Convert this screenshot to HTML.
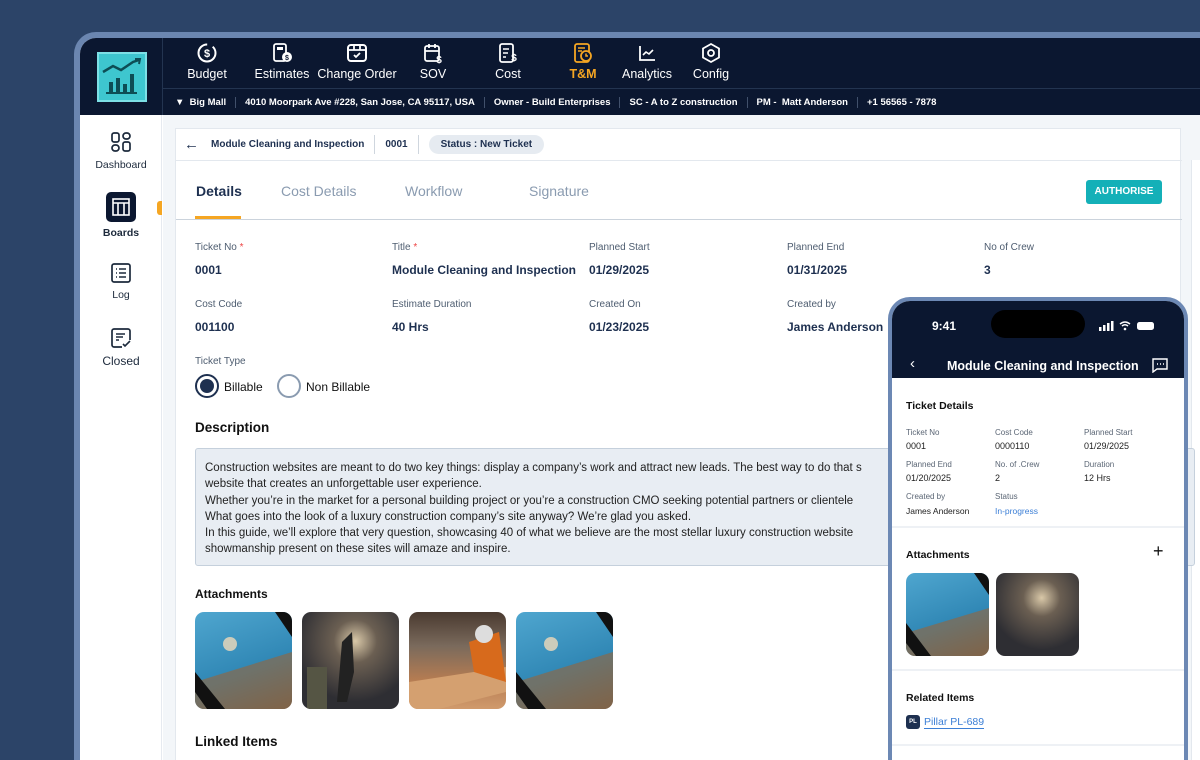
<!DOCTYPE html>
<html><head><meta charset="utf-8"><style>
*{margin:0;padding:0;box-sizing:border-box}
html,body{width:1200px;height:760px;overflow:hidden}
body{background:#2c4468;font-family:"Liberation Sans",sans-serif;position:relative}
.abs{position:absolute}
.frame{left:74px;top:32px;width:1126px;height:728px;border-radius:22px 0 0 0;background:#6b86b0}
.app{left:80px;top:38px;width:1120px;height:722px;background:#fff;border-radius:16px 0 0 0;overflow:hidden}
.top{left:0;top:0;width:1130px;height:77px;background:#0b1730}
.logo{left:17px;top:14px;width:50px;height:50px;background:#3ec6cf;border:2px solid #7de0e6}
.nav{top:4px;text-align:center;color:#fff;font-size:12.5px;width:80px}
.nav svg{display:block;margin:0 auto 3px}
.sub{left:83px;top:50px;height:27px;width:1050px;border-top:1px solid #233450;color:#fff;font-size:9.5px;font-weight:bold;display:flex;align-items:center;padding-left:12px}
.sub span{padding:0 9px;border-left:1px solid #41506b}
.sub span:first-child{border:none;padding-left:0}
.vsep{left:82px;top:0;width:1px;height:77px;background:#233450}
.side{left:0;top:77px;width:82px;height:650px;background:#fff;border-right:1px solid #e6eaf0}
.si{width:82px;text-align:center;font-size:10.5px;color:#1d2a3c}
.main{left:83px;top:77px;width:1050px;height:650px;background:#f3f6f9}
.card{left:12px;top:13px;width:1006px;height:650px;background:#fff;border:1px solid #e3e8ee}
.lbl{font-size:10px;color:#4e5d70}
.val{font-size:12px;font-weight:bold;color:#1e3050}
.h{font-size:13.5px;font-weight:bold;color:#111}
.img{border-radius:9px;overflow:hidden}
.phone{left:888px;top:297px;width:300px;height:463px;border-radius:22px 22px 0 0;background:#6c88b4;padding:4px 4px 0}
.pin{width:292px;height:459px;border-radius:18px 18px 0 0;background:#fff;overflow:hidden;position:relative}
.pl{font-size:8px;color:#5b6675}
.pv{font-size:9px;color:#222}
</style></head><body>
<div class="abs frame"></div>
<div class="abs app">
 <div class="abs top">
  <div class="abs logo"><svg width="46" height="46" viewBox="0 0 46 46"><path d="M4 18 L14 12 L22 16 L34 8 L40 6" stroke="#0d4d55" stroke-width="2.5" fill="none"/><path d="M36 5 L41 5 L40 10" stroke="#0d4d55" stroke-width="2" fill="none"/><rect x="10" y="28" width="4" height="10" fill="#0d4d55"/><rect x="17" y="24" width="4" height="14" fill="#0d4d55"/><rect x="24" y="30" width="4" height="8" fill="#0d4d55"/><rect x="31" y="20" width="4" height="18" fill="#0d4d55"/><rect x="7" y="38" width="31" height="2" fill="#0d4d55"/></svg></div>
  <div class="abs vsep"></div>
  <div class="abs nav" style="left:87px"><svg width="22" height="22" viewBox="0 0 22 22"><circle cx="11" cy="11" r="8.5" stroke="#fff" stroke-width="2" fill="none" stroke-dasharray="40 6"/><text x="11" y="15" fill="#fff" font-size="11" font-weight="bold" text-anchor="middle" font-family="Liberation Sans">$</text></svg>Budget</div>
  <div class="abs nav" style="left:162px"><svg width="22" height="22" viewBox="0 0 22 22"><rect x="3" y="2" width="12" height="17" rx="2" stroke="#fff" stroke-width="1.8" fill="none"/><rect x="6" y="5" width="6" height="3" fill="#fff"/><circle cx="16" cy="15" r="5" fill="#fff"/><text x="16" y="18" font-size="7" text-anchor="middle" fill="#0b1730" font-weight="bold">$</text></svg>Estimates</div>
  <div class="abs nav" style="left:237px;width:80px"><svg width="22" height="22" viewBox="0 0 22 22"><rect x="2" y="3" width="18" height="16" rx="3" stroke="#fff" stroke-width="2" fill="none"/><path d="M2 8H20M8 3V8M14 3V8M8 13L10 15L14 11" stroke="#fff" stroke-width="1.8" fill="none"/></svg>Change Order</div>
  <div class="abs nav" style="left:313px"><svg width="22" height="22" viewBox="0 0 22 22"><rect x="3" y="4" width="14" height="15" rx="2" stroke="#fff" stroke-width="1.8" fill="none"/><path d="M3 9H17M7 2V6M13 2V6" stroke="#fff" stroke-width="1.8"/><text x="17" y="21" font-size="10" fill="#fff" font-weight="bold" text-anchor="middle">$</text></svg>SOV</div>
  <div class="abs nav" style="left:388px"><svg width="22" height="22" viewBox="0 0 22 22"><rect x="3" y="2" width="13" height="18" rx="2" stroke="#fff" stroke-width="1.8" fill="none"/><path d="M6 7H12M6 11H11M6 15H9" stroke="#fff" stroke-width="1.6"/><text x="17" y="19" font-size="10" fill="#fff" font-weight="bold" text-anchor="middle">$</text></svg>Cost</div>
  <div class="abs nav" style="left:463px;color:#f5a623;font-weight:bold"><svg width="22" height="22" viewBox="0 0 22 22"><rect x="3" y="2" width="14" height="18" rx="2" stroke="#f5a623" stroke-width="1.8" fill="none"/><path d="M6 6H13M6 9H10" stroke="#f5a623" stroke-width="1.6"/><circle cx="14" cy="14" r="5" stroke="#f5a623" stroke-width="1.8" fill="#0b1730"/><path d="M14 11.5V14H16" stroke="#f5a623" stroke-width="1.5" fill="none"/></svg>T&amp;M</div>
  <div class="abs nav" style="left:527px"><svg width="22" height="22" viewBox="0 0 22 22"><path d="M4 4V18H19" stroke="#fff" stroke-width="1.8" fill="none"/><path d="M7 13L10 10L13 12L17 8" stroke="#fff" stroke-width="1.6" fill="none"/></svg>Analytics</div>
  <div class="abs nav" style="left:591px"><svg width="22" height="22" viewBox="0 0 22 22"><path d="M11 2L19 6.5V15.5L11 20L3 15.5V6.5Z" stroke="#fff" stroke-width="1.8" fill="none"/><circle cx="11" cy="11" r="3" stroke="#fff" stroke-width="1.8" fill="none"/></svg>Config</div>
  <div class="abs sub"><span>▼&nbsp; Big Mall</span><span>4010 Moorpark Ave #228, San Jose, CA 95117, USA</span><span>Owner - Build Enterprises</span><span>SC - A to Z construction</span><span>PM -&nbsp; Matt Anderson</span><span>+1 56565 - 7878</span></div>
 </div>
 <div class="abs side">
  <div class="abs si" style="top:16px"><svg width="22" height="22" viewBox="0 0 22 22" style="display:block;margin:0 auto 6px"><rect x="2" y="2" width="7" height="9" rx="2" stroke="#1d2a3c" stroke-width="1.7" fill="none"/><rect x="13" y="2" width="7" height="6" rx="3" stroke="#1d2a3c" stroke-width="1.7" fill="none"/><rect x="2" y="14" width="7" height="6" rx="3" stroke="#1d2a3c" stroke-width="1.7" fill="none"/><rect x="13" y="11" width="7" height="9" rx="2" stroke="#1d2a3c" stroke-width="1.7" fill="none"/></svg>Dashboard</div>
  <div class="abs si" style="top:77px;font-weight:bold"><div style="width:30px;height:30px;background:#0b1730;border-radius:5px;margin:0 auto 5px;padding:6px"><svg width="18" height="18" viewBox="0 0 18 18"><rect x="1" y="1" width="16" height="16" stroke="#fff" stroke-width="1.6" fill="none"/><path d="M1 5H17M6 5V17M12 5V17" stroke="#fff" stroke-width="1.6"/></svg></div>Boards</div>
  <div class="abs" style="left:77px;top:86px;width:5px;height:14px;background:#f5a623;border-radius:3px 0 0 3px"></div>
  <div class="abs si" style="top:147px"><svg width="22" height="22" viewBox="0 0 22 22" style="display:block;margin:0 auto 5px"><rect x="2" y="2" width="18" height="18" rx="2" stroke="#1d2a3c" stroke-width="1.7" fill="none"/><path d="M6 7H7M6 11H7M6 15H7M9 7H16M9 11H16M9 15H16" stroke="#1d2a3c" stroke-width="1.6"/></svg>Log</div>
  <div class="abs si" style="top:212px;font-size:12px"><svg width="22" height="22" viewBox="0 0 22 22" style="display:block;margin:0 auto 5px"><path d="M12 20H4a2 2 0 0 1-2-2V4a2 2 0 0 1 2-2h14a2 2 0 0 1 2 2v9" stroke="#1d2a3c" stroke-width="1.7" fill="none"/><path d="M6 7H15M6 10H13M6 13H9M13 17L15 19L20 14" stroke="#1d2a3c" stroke-width="1.6" fill="none"/></svg>Closed</div>
 </div>
 <div class="abs main">
  <div class="abs" style="left:1028px;top:45px;width:22px;height:630px;background:#fff;border-left:1px solid #e3e8ee"></div>
  <div class="abs card">
   <div class="abs" style="left:0;top:0;width:1006px;height:32px;border-bottom:1px solid #e3e8ee;display:flex;align-items:center;font-size:10px;color:#1e3050;font-weight:bold">
    <span style="font-size:15px;margin:0 12px 0 8px;font-weight:normal">←</span><span>Module Cleaning and Inspection</span><span style="border-left:1px solid #cfd6de;border-right:1px solid #cfd6de;padding:4px 10px;margin:0 10px">0001</span><span style="background:#e6ebf1;border-radius:10px;padding:4px 12px">Status : New Ticket</span>
   </div>
   <div class="abs" style="left:0;top:33px;width:1006px;height:58px;border-bottom:1px solid #cbd3dc"></div>
   <div class="abs" style="left:20px;top:54px;font-size:14px;font-weight:bold;color:#1e3050">Details</div>
   <div class="abs" style="left:19px;top:87px;width:46px;height:3px;background:#f5a623"></div>
   <div class="abs" style="left:105px;top:54px;font-size:14px;color:#8a9bb0">Cost Details</div>
   <div class="abs" style="left:229px;top:54px;font-size:14px;color:#8a9bb0">Workflow</div>
   <div class="abs" style="left:353px;top:54px;font-size:14px;color:#8a9bb0">Signature</div>
   <div class="abs" style="left:910px;top:51px;width:76px;height:24px;background:#14b0b8;border-radius:3px;color:#fff;font-size:10px;font-weight:bold;text-align:center;line-height:24px">AUTHORISE</div>

   <div class="abs lbl" style="left:19px;top:113px">Ticket No <span style="color:#e44">*</span></div><div class="abs val" style="left:19px;top:134px">0001</div>
   <div class="abs lbl" style="left:216px;top:113px">Title <span style="color:#e44">*</span></div><div class="abs val" style="left:216px;top:134px">Module Cleaning and Inspection</div>
   <div class="abs lbl" style="left:413px;top:113px">Planned Start</div><div class="abs val" style="left:413px;top:134px">01/29/2025</div>
   <div class="abs lbl" style="left:611px;top:113px">Planned End</div><div class="abs val" style="left:611px;top:134px">01/31/2025</div>
   <div class="abs lbl" style="left:808px;top:113px">No of Crew</div><div class="abs val" style="left:808px;top:134px">3</div>
   <div class="abs lbl" style="left:19px;top:170px">Cost Code</div><div class="abs val" style="left:19px;top:191px">001100</div>
   <div class="abs lbl" style="left:216px;top:170px">Estimate Duration</div><div class="abs val" style="left:216px;top:191px">40 Hrs</div>
   <div class="abs lbl" style="left:413px;top:170px">Created On</div><div class="abs val" style="left:413px;top:191px">01/23/2025</div>
   <div class="abs lbl" style="left:611px;top:170px">Created by</div><div class="abs val" style="left:611px;top:191px">James Anderson</div>
   <div class="abs lbl" style="left:19px;top:227px">Ticket Type</div>
   <div class="abs" style="left:19px;top:245px;width:24px;height:24px;border-radius:50%;border:2px solid #1e3050;padding:3px"><div style="width:14px;height:14px;border-radius:50%;background:#1e3050"></div></div>
   <div class="abs" style="left:48px;top:251px;font-size:12px;color:#111">Billable</div>
   <div class="abs" style="left:101px;top:245px;width:24px;height:24px;border-radius:50%;border:2px solid #8a9bb0"></div>
   <div class="abs" style="left:130px;top:251px;font-size:12px;color:#111">Non Billable</div>
   <div class="abs h" style="left:19px;top:291px">Description</div>
   <div class="abs" style="left:19px;top:319px;width:1000px;height:118px;background:#e8edf3;border:1px solid #c5d0dc;border-radius:3px;padding:11px 9px;font-size:11.5px;line-height:16.3px;color:#222;white-space:nowrap">Construction websites are meant to do two key things: display a company’s work and attract new leads. The best way to do that s<br>website that creates an unforgettable user experience.<br>Whether you’re in the market for a personal building project or you’re a construction CMO seeking potential partners or clientele<br>What goes into the look of a luxury construction company’s site anyway? We’re glad you asked.<br>In this guide, we’ll explore that very question, showcasing 40 of what we believe are the most stellar luxury construction website<br>showmanship present on these sites will amaze and inspire.</div>
   <div class="abs" style="left:19px;top:458px;font-size:12px;font-weight:bold;color:#111">Attachments</div>
   <div class="abs img" style="left:19px;top:483px;width:97px;height:97px;background:linear-gradient(160deg,#4fa6cf,#2f86b4 60%,#6a5440)"><svg width="97" height="97"><path d="M0 70L97 40V97H0Z" fill="#8a6a4a" opacity=".7"/><path d="M0 60L30 97H12L0 80Z" fill="#111"/><path d="M80 0H97V25Z" fill="#111"/><circle cx="35" cy="32" r="7" fill="#ccb"/></svg></div>
   <div class="abs img" style="left:126px;top:483px;width:97px;height:97px;background:radial-gradient(circle at 55% 30%,#d9c8a8 0,#6b5f52 25%,#2e2e33 70%)"><svg width="97" height="97"><path d="M40 30L50 20L52 60L45 90H35Z" fill="#222"/><path d="M5 55H25V97H5Z" fill="#554"/></svg></div>
   <div class="abs img" style="left:233px;top:483px;width:97px;height:97px;background:linear-gradient(180deg,#4a3a30,#7a6a5c 35%,#b57c52 70%,#d09a6c)"><svg width="97" height="97"><path d="M0 70L97 55V80L30 97H0Z" fill="#d4a070"/><path d="M60 30L90 20L97 70L65 60Z" fill="#d76a1c"/><circle cx="75" cy="22" r="9" fill="#ddd"/></svg></div>
   <div class="abs img" style="left:340px;top:483px;width:97px;height:97px;background:linear-gradient(160deg,#4fa6cf,#2f86b4 60%,#6a5440)"><svg width="97" height="97"><path d="M0 70L97 40V97H0Z" fill="#8a6a4a" opacity=".7"/><path d="M0 60L30 97H12L0 80Z" fill="#111"/><path d="M80 0H97V25Z" fill="#111"/><circle cx="35" cy="32" r="7" fill="#ccb"/></svg></div>
   <div class="abs h" style="left:19px;top:605px">Linked Items</div>
  </div>
 </div>
</div>
<div class="abs phone"><div class="pin">
 <div class="abs" style="left:0;top:0;width:292px;height:77px;background:#0b1730"></div>
 <div class="abs" style="left:40px;top:18px;color:#fff;font-size:12px;font-weight:bold">9:41</div>
 <div class="abs" style="left:99px;top:9px;width:94px;height:28px;border-radius:14px;background:#000"></div>
 <svg class="abs" style="left:207px;top:20px" width="70" height="10"><rect x="0" y="6" width="2.5" height="4" fill="#fff"/><rect x="4" y="4" width="2.5" height="6" fill="#fff"/><rect x="8" y="2" width="2.5" height="8" fill="#fff"/><rect x="12" y="0" width="2.5" height="10" fill="#fff"/><path d="M21 3Q26 -1 31 3M23 5Q26 2.5 29 5" stroke="#fff" stroke-width="1.5" fill="none"/><circle cx="26" cy="8" r="1.3" fill="#fff"/><rect x="38" y="1" width="17" height="8" rx="2.5" fill="#fff"/></svg>
 <div class="abs" style="left:18px;top:54px;color:#fff;font-size:15px">‹</div>
 <div class="abs" style="left:55px;top:58px;color:#fff;font-size:12.5px;font-weight:bold">Module Cleaning and Inspection</div>
 <svg class="abs" style="left:260px;top:57px" width="16" height="15"><path d="M1 1H15V11H5L1 14Z" stroke="#fff" stroke-width="1.4" fill="none"/><path d="M5 6H6M8 6H9M11 6H12" stroke="#fff" stroke-width="1.4"/></svg>
 <div class="abs" style="left:14px;top:99px;font-size:10.5px;font-weight:bold;color:#111">Ticket Details</div>
 <div class="abs pl" style="left:14px;top:127px">Ticket No</div><div class="abs pv" style="left:14px;top:140px">0001</div>
 <div class="abs pl" style="left:103px;top:127px">Cost Code</div><div class="abs pv" style="left:103px;top:140px">0000110</div>
 <div class="abs pl" style="left:192px;top:127px">Planned Start</div><div class="abs pv" style="left:192px;top:140px">01/29/2025</div>
 <div class="abs pl" style="left:14px;top:159px">Planned End</div><div class="abs pv" style="left:14px;top:172px">01/20/2025</div>
 <div class="abs pl" style="left:103px;top:159px">No. of .Crew</div><div class="abs pv" style="left:103px;top:172px">2</div>
 <div class="abs pl" style="left:192px;top:159px">Duration</div><div class="abs pv" style="left:192px;top:172px">12 Hrs</div>
 <div class="abs pl" style="left:14px;top:191px">Created by</div><div class="abs pv" style="left:14px;top:205px;font-size:8.5px">James Anderson</div>
 <div class="abs pl" style="left:103px;top:191px">Status</div><div class="abs pv" style="left:103px;top:205px;color:#3c7fd6;font-size:8.5px">In-progress</div>
 <div class="abs" style="left:0;top:225px;width:292px;height:2px;background:#eef1f5"></div>
 <div class="abs" style="left:14px;top:248px;font-size:10.5px;font-weight:bold;color:#111">Attachments</div>
 <div class="abs" style="left:261px;top:240px;font-size:18px;color:#111">+</div>
 <div class="abs img" style="left:14px;top:272px;width:83px;height:83px;background:linear-gradient(160deg,#4fa6cf,#2f86b4 60%,#6a5440)"><svg width="83" height="83"><path d="M0 60L83 35V83H0Z" fill="#8a6a4a" opacity=".7"/><path d="M0 50L25 83H10L0 70Z" fill="#111"/><path d="M68 0H83V22Z" fill="#111"/></svg></div>
 <div class="abs img" style="left:104px;top:272px;width:83px;height:83px;background:radial-gradient(circle at 55% 30%,#d9c8a8 0,#6b5f52 25%,#2e2e33 70%)"></div>
 <div class="abs" style="left:0;top:368px;width:292px;height:2px;background:#eef1f5"></div>
 <div class="abs" style="left:14px;top:391px;font-size:10.5px;font-weight:bold;color:#111">Related Items</div>
 <div class="abs" style="left:14px;top:414px;width:14px;height:14px;background:#1e3050;border-radius:3px;color:#fff;font-size:6px;font-weight:bold;text-align:center;line-height:14px">PL</div>
 <div class="abs" style="left:32px;top:415px;font-size:10.5px;color:#3c7fd6;border-bottom:1px solid #3c7fd6">Pillar PL-689</div>
 <div class="abs" style="left:0;top:443px;width:292px;height:2px;background:#eef1f5"></div>
</div></div>
</body></html>
